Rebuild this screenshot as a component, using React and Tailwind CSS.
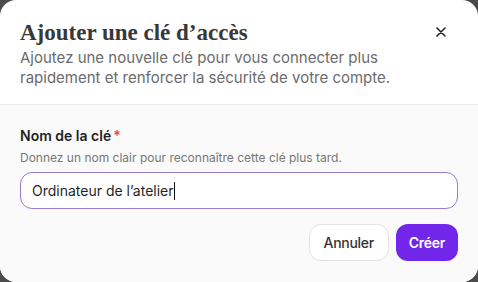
import React from "react";

export default function App() {
  return (
    <div className="w-[478px] h-[282px] bg-[#4b4b4b]">
      <div className="w-full h-full bg-white rounded-[16px] overflow-hidden flex flex-col font-['Inter',sans-serif]">
        <div className="relative px-5 pt-[18px] pb-[16px] border-b border-[#ececec]">
          <h1 className="font-['Liberation_Serif',serif] font-bold text-[23px] leading-[30px] text-[#383838]">
            Ajouter une clé d’accès
          </h1>
          <p className="text-[15px] leading-[20px] text-[#6b6b6b] w-[380px]">
            Ajoutez une nouvelle clé pour vous connecter plus rapidement et renforcer la sécurité de votre compte.
          </p>
          <button className="absolute right-[32px] top-[27px] text-[#222]">
            <svg width="10" height="10" viewBox="0 0 10 10" fill="none" stroke="currentColor" strokeWidth="1.6" strokeLinecap="round">
              <path d="M1 1L9 9M9 1L1 9" />
            </svg>
          </button>
        </div>
        <div className="flex-1 bg-[#fafafa] px-5 pt-[22px]">
          <label className="block text-[14px] leading-[18px] font-semibold text-[#1f1f1f]">
            Nom de la clé<span className="text-[#e5484d] ml-[2px]">*</span>
          </label>
          <p className="mt-[5px] text-[12px] leading-[16px] text-[#777]">
            Donnez un nom clair pour reconnaître cette clé plus tard.
          </p>
          <div className="mt-[6px] h-[37px] rounded-[12px] border-[1.5px] border-[#9a7bd0] bg-white flex items-center px-[11px] text-[14px] text-[#1f1f1f]">
            <span>Ordinateur de l’atelier</span>
            <span className="w-px h-[18px] bg-[#111]"></span>
          </div>
          <div className="mt-[15px] flex justify-end gap-[7px]">
            <button className="h-[37px] px-[14px] rounded-[12px] border border-[#e2e2e2] bg-white text-[14px] tracking-[-0.3px] font-medium text-[#333]">
              Annuler
            </button>
            <button className="h-[37px] px-[13px] rounded-[12px] bg-[#7226ea] text-[14px] tracking-[-0.3px] font-semibold text-white">
              Créer
            </button>
          </div>
        </div>
      </div>
    </div>
  );
}
